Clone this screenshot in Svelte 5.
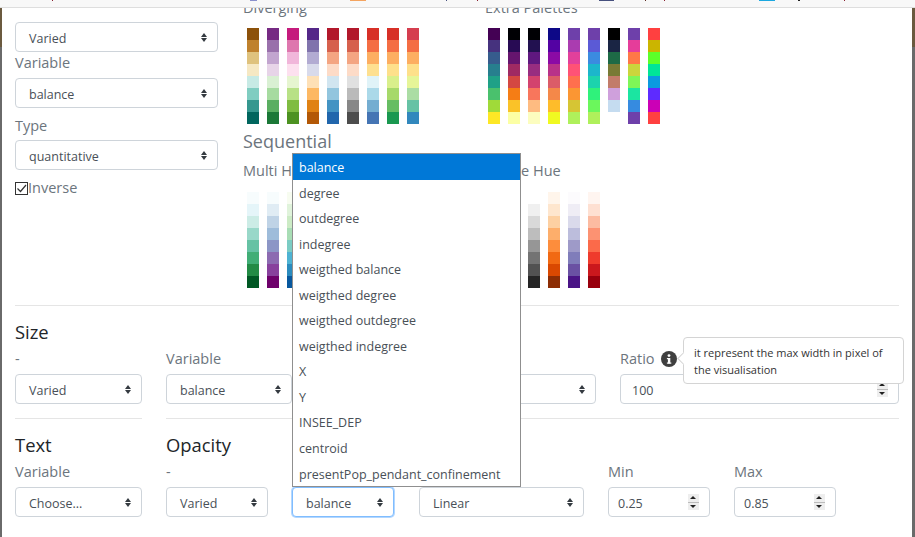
<script lang="ts">
	const diverging = [
		['#8c510a', '#bf812d', '#dfc27d', '#f6e8c3', '#c7eae5', '#80cdc1', '#35978f', '#01665e'],
		['#762a83', '#9970ab', '#c2a5cf', '#e7d4e8', '#d9f0d3', '#a6dba0', '#5aae61', '#1b7837'],
		['#c51b7d', '#de77ae', '#f1b6da', '#fde0ef', '#e6f5d0', '#b8e186', '#7fbc41', '#4d9221'],
		['#542788', '#8073ac', '#b2abd2', '#d8daeb', '#fee0b6', '#fdb863', '#e08214', '#b35806'],
		['#b2182b', '#d6604d', '#f4a582', '#fddbc7', '#d1e5f0', '#92c5de', '#4393c3', '#2166ac'],
		['#b2182b', '#d6604d', '#f4a582', '#fddbc7', '#e0e0e0', '#bababa', '#878787', '#4d4d4d'],
		['#d73027', '#f46d43', '#fdae61', '#fee090', '#e0f3f8', '#abd9e9', '#74add1', '#4575b4'],
		['#d73027', '#f46d43', '#fdae61', '#fee08b', '#d9ef8b', '#a6d96a', '#66bd63', '#1a9850'],
		['#d53e4f', '#f46d43', '#fdae61', '#fee08b', '#e6f598', '#abdda4', '#66c2a5', '#3288bd']
	];
	const extra = [
		['#440154', '#46327e', '#365c8d', '#277f8e', '#1fa187', '#4ac16d', '#a0da39', '#fde725'],
		['#000004', '#280b54', '#65156e', '#9f2a63', '#d44842', '#f57d15', '#fac228', '#fcffa4'],
		['#000004', '#221150', '#5f187f', '#982d80', '#d3436e', '#f8765c', '#febb81', '#fcfdbf'],
		['#0d0887', '#5302a3', '#8b0aa5', '#b83289', '#db5c68', '#f48849', '#febc2a', '#f0f921'],
		['#6e40aa', '#aa3cb0', '#e2409b', '#ff5276', '#ff6f4e', '#fb9633', '#d6c534', '#aff05b'],
		['#6e40aa', '#5b5ad6', '#3b8be0', '#1cb6cb', '#1cd3ad', '#2ff27b', '#6bf75c', '#aff05b'],
		['#000000', '#1a2544', '#1d6a46', '#787a35', '#c27c6a', '#cfa0dc', '#c5dcf0', '#ffffff'],
		['#6e40aa', '#e53d9a', '#ff7847', '#cbd53c', '#7ef658', '#1be5a1', '#368be0', '#6e40aa'],
		['#ff4040', '#cbb500', '#5cff29', '#00e598', '#0b9ae0', '#5e2bff', '#cb00b6', '#ff4040']
	];
	const multiHue = [
		['#f7fcfd', '#e5f5f9', '#ccece6', '#99d8c9', '#66c2a4', '#41ae76', '#238b45', '#005824'],
		['#f7fcfd', '#e0ecf4', '#bfd3e6', '#9ebcda', '#8c96c6', '#8c6bb1', '#88419d', '#6e016b'],
		['#f7fcf0', '#e0f3db', '#ccebc5', '#a8ddb5', '#7bccc4', '#4eb3d3', '#2b8cbe', '#08589e']
	];
	const singleHue = [
		['#f7fbff', '#deebf7', '#c6dbef', '#9ecae1', '#6baed6', '#4292c6', '#2171b5', '#084594'],
		['#f7fcf5', '#e5f5e0', '#c7e9c0', '#a1d99b', '#74c476', '#41ab5d', '#238b45', '#005a32'],
		['#ffffff', '#f0f0f0', '#d9d9d9', '#bdbdbd', '#969696', '#737373', '#525252', '#252525'],
		['#fff5eb', '#fee6ce', '#fdd0a2', '#fdae6b', '#fd8d3c', '#f16913', '#d94801', '#8c2d04'],
		['#fcfbfd', '#efedf5', '#dadaeb', '#bcbddc', '#9e9ac8', '#807dba', '#6a51a3', '#4a1486'],
		['#fff5f0', '#fee0d2', '#fcbba1', '#fc9272', '#fb6a4a', '#ef3b2c', '#cb181d', '#99000d']
	];
	const options = [
		'balance', 'degree', 'outdegree', 'indegree', 'weigthed balance', 'weigthed degree',
		'weigthed outdegree', 'weigthed indegree', 'X', 'Y', 'INSEE_DEP', 'centroid',
		'presentPop_pendant_confinement'
	];
	// slivers of the page behind the modal, peeking out at the very top
	const slivers = [
		[52, 1, '#8a2030'], [250, 7, '#8a90cc'], [350, 16, '#f4a460'], [446, 1, '#46507e'],
		[477, 1, '#8a2030'], [599, 15, '#46507e'], [645, 1, '#5a2a20'], [664, 1, '#8a2030'],
		[759, 16, '#1ca8e0'], [798, 2, '#222222'], [844, 1, '#8a2030']
	];
</script>

{#snippet palettes(list)}
	<div class="palettes">
		{#each list as palette}
			<div class="palette">
				{#each palette as color}
					<span style="background: {color}"></span>
				{/each}
			</div>
		{/each}
	</div>
{/snippet}

{#snippet field(value, cls = '')}
	<div class="select {cls}"><span>{value}</span><i></i></div>
{/snippet}

{#snippet number(value, cls = '')}
	<div class="number {cls}">
		<span>{value}</span>
		<b class="spin"><em class="up"></em><em class="down"></em></b>
	</div>
{/snippet}

<div class="page">
	<div class="topbar">
		{#each slivers as [x, w, color]}
			<span style="left: {x}px; width: {w}px; background: {color}"></span>
		{/each}
	</div>
	<div class="modal">
		<div class="color-row">
			<div class="left">
				{@render field('Varied')}
				<label class="var-label">Variable</label>
				{@render field('balance')}
				<label class="type-label">Type</label>
				{@render field('quantitative')}
				<div class="inverse">
					<span class="check">
						<svg viewBox="0 0 13 13" width="13" height="13"><path d="M2.5 6.5l3 3 5.5-6.5" fill="none" stroke="#333" stroke-width="1.2" /></svg>
					</span>
					<span>Inverse</span>
				</div>
			</div>
			<div class="right">
				<div class="pal-grid top">
					<div>
						<h6>Diverging</h6>
						{@render palettes(diverging)}
					</div>
					<div class="second">
						<h6>Extra Palettes</h6>
						{@render palettes(extra)}
					</div>
				</div>
				<h5>Sequential</h5>
				<div class="pal-grid seq">
					<div>
						<h6>Multi Hue</h6>
						{@render palettes(multiHue)}
					</div>
					<div class="second">
						<h6 class="single">Single Hue</h6>
						{@render palettes(singleHue)}
					</div>
				</div>
			</div>
		</div>

		<hr class="rule-one" />

		<h4 class="size-title">Size</h4>
		<div class="size-row">
			<div class="c1"><label>-</label>{@render field('Varied')}</div>
			<div class="c2"><label>Variable</label>{@render field('balance')}</div>
			<div class="c3"><label>&nbsp;</label>{@render field('Linear')}</div>
			<div class="c4">
				<label class="ratio">Ratio <svg class="info" viewBox="0 0 16 16" width="16" height="16"><circle cx="8" cy="8" r="8" fill="#3f3f3f" /><rect x="6.9" y="7" width="2.4" height="5.5" fill="#fff" /><rect x="5.9" y="7" width="3" height="1.2" fill="#fff" /><rect x="5.9" y="11.5" width="4.4" height="1.2" fill="#fff" /><circle cx="8" cy="4.6" r="1.4" fill="#fff" /></svg></label>
				{@render number('100', 'ratio-input')}
			</div>
		</div>

		<div class="rules">
			<hr class="short" />
			<hr class="long" />
		</div>

		<div class="bottom-row">
			<div class="c1">
				<h4>Text</h4>
				<label>Variable</label>
				{@render field('Choose...')}
			</div>
			<div class="opacity">
				<h4>Opacity</h4>
				<div class="opacity-fields">
					<div class="o1"><label>-</label>{@render field('Varied')}</div>
					<div class="o2"><label>&nbsp;</label>{@render field('balance', 'focus')}</div>
					<div class="o3"><label>&nbsp;</label>{@render field('Linear')}</div>
					<div class="o4"><label>Min</label>{@render number('0.25')}</div>
					<div class="o4"><label>Max</label>{@render number('0.85')}</div>
				</div>
			</div>
		</div>

		<ul class="dropdown">
			{#each options as option, i}
				<li class:active={i === 0}>{option}</li>
			{/each}
		</ul>

		<div class="tooltip">it represent the max width in pixel of the visualisation</div>
	</div>
</div>

<style>
	:global(body) {
		margin: 0;
		background: #fff;
	}
	.page {
		width: 915px;
		height: 537px;
		overflow: hidden;
		display: flex;
		flex-direction: column;
		font-family: 'Open Sans', 'Noto Sans', sans-serif;
		color: #495057;
		background: linear-gradient(#6b5a3f 47px, #6a6a6a 47px);
	}
	.topbar {
		height: 7px;
		flex: none;
		background: #f8f8f8;
		border-bottom: 1px solid #dedede;
		position: relative;
		z-index: 2;
	}
	.topbar span {
		position: absolute;
		top: 0;
		height: 1px;
	}
	.modal {
		position: relative;
		flex: 1;
		margin: 0 3px 0 2px;
		padding: 0 13px;
		background: #fff;
		min-height: 0;
	}
	h4,
	h5,
	h6,
	label {
		margin: 0;
		font-weight: 400;
		display: block;
	}
	h4 {
		font-size: 18.4px;
		line-height: 24px;
		color: #212529;
	}
	h5 {
		font-size: 18px;
		line-height: 24px;
		color: #6c757d;
		margin-top: 5px;
	}
	h6 {
		font-size: 14.5px;
		line-height: 20px;
		color: #6c757d;
	}
	h6.single {
		padding-left: 4px;
	}
	label {
		font-size: 14.5px;
		line-height: 20px;
		color: #6c757d;
	}
	.color-row {
		display: flex;
		height: 297px;
	}
	.left {
		width: 203px;
		flex: none;
		padding-top: 14px;
	}
	.var-label {
		height: 26px;
		line-height: 21px;
	}
	.type-label {
		margin-top: 8px;
		height: 24px;
	}
	.right {
		margin-left: 25px;
		margin-top: -10px;
		flex: 1;
	}
	.pal-grid {
		display: flex;
	}
	.pal-grid > div {
		width: 242px;
	}
	.pal-grid.seq {
		margin-top: 8px;
	}
	.pal-grid.seq .palettes {
		padding-top: 11px;
	}
	.palettes {
		display: flex;
		gap: 8px;
		padding: 10px 4px 0;
	}
	.second .palettes {
		padding-left: 3px;
	}
	.palette {
		width: 12px;
		display: flex;
		flex-direction: column;
	}
	.palette span {
		height: 12px;
	}
	.select {
		height: 30px;
		box-sizing: border-box;
		border: 1px solid #ced4da;
		border-radius: 4px;
		padding: 2px 10px 0 13px;
		display: flex;
		align-items: center;
		justify-content: space-between;
		font-size: 12.5px;
		color: #495057;
		background: #fff;
		position: relative;
	}
	.select i {
		width: 6px;
		height: 9px;
		position: relative;
		display: block;
		margin-top: -2px;
	}
	.select i::before,
	.select i::after {
		content: '';
		position: absolute;
		left: 0;
		border-left: 3px solid transparent;
		border-right: 3px solid transparent;
	}
	.select i::before {
		top: 0;
		border-bottom: 4px solid #343a40;
	}
	.select i::after {
		bottom: 0;
		border-top: 4px solid #343a40;
	}
	.select.focus {
		border-color: #80bdff;
		box-shadow: 0 0 0 1px rgba(128, 189, 255, 0.6);
	}
	.number {
		height: 30px;
		box-sizing: border-box;
		border: 1px solid #ced4da;
		border-radius: 4px;
		padding: 0 10px 0 9px;
		display: flex;
		align-items: center;
		justify-content: space-between;
		font-size: 12.5px;
		color: #495057;
		background: #fff;
	}
	.number > span {
		padding-top: 2px;
	}
	.number.ratio-input {
		padding-left: 11px;
	}
	.spin {
		width: 11px;
		height: 16px;
		display: flex;
		flex-direction: column;
		gap: 1px;
		background: #bbb;
	}
	.spin em {
		flex: 1;
		background: #eee;
		position: relative;
	}
	.spin em::after {
		content: '';
		position: absolute;
		left: 2px;
		border-left: 3px solid transparent;
		border-right: 3px solid transparent;
	}
	.spin .up::after {
		top: 2px;
		border-bottom: 3px solid #222;
	}
	.spin .down::after {
		top: 2px;
		border-top: 3px solid #222;
	}
	.inverse {
		display: flex;
		align-items: center;
		font-size: 14.5px;
		line-height: 20px;
		color: #6c757d;
		margin-top: 8px;
	}
	.check {
		width: 13px;
		height: 13px;
		border: 1px solid #333;
		box-sizing: border-box;
		display: flex;
		align-items: center;
		justify-content: center;
	}
	.check svg {
		flex: none;
	}
	hr {
		border: 0;
		border-top: 1px solid #e5e5e5;
		margin: 0;
	}
	.size-title {
		margin-top: 14px;
	}
	.size-row {
		display: flex;
		margin-top: 5px;
	}
	.size-row label,
	.bottom-row label {
		margin-bottom: 5px;
	}
	.bottom-row h4 {
		margin-bottom: 5px;
	}
	.c1 {
		width: 127px;
		flex: none;
	}
	.c2 {
		width: 126px;
		margin-left: 24px;
		flex: none;
	}
	.c3 {
		width: 178px;
		margin-left: 126px;
		flex: none;
	}
	.c4 {
		flex: 1;
		margin-left: 24px;
	}
	.ratio {
		display: flex;
		align-items: center;
		gap: 6px;
	}
	.rules {
		display: flex;
		margin-top: 14px;
	}
	.short {
		width: 127px;
		flex: none;
	}
	.long {
		flex: 1;
		margin-left: 24px;
	}
	.bottom-row {
		display: flex;
		margin-top: 14px;
	}
	.opacity {
		margin-left: 24px;
		flex: 1;
	}
	.opacity-fields {
		display: flex;
	}
	.o1 {
		width: 102px;
		flex: none;
	}
	.o2 {
		width: 102px;
		flex: none;
		margin-left: 24px;
	}
	.o3 {
		width: 165px;
		flex: none;
		margin-left: 25px;
	}
	.o4 {
		width: 102px;
		flex: none;
		margin-left: 24px;
	}
	.dropdown {
		position: absolute;
		left: 290px;
		top: 145px;
		width: 229px;
		box-sizing: border-box;
		margin: 0;
		padding: 0;
		list-style: none;
		background: #fff;
		border: 1px solid #8f8f8f;
		font-size: 12.5px;
		color: #495057;
		z-index: 3;
	}
	.dropdown li {
		height: 25.55px;
		line-height: 27.5px;
		padding: 0 6px;
		white-space: nowrap;
	}
	.dropdown li.active {
		background: #0078d7;
		color: #fff;
	}
	.tooltip {
		position: absolute;
		left: 681px;
		top: 329px;
		width: 221px;
		height: 47px;
		box-sizing: border-box;
		padding: 6px 10px;
		background: #fff;
		border: 1px solid #d4d4d4;
		border-radius: 4px;
		font-size: 11px;
		line-height: 17px;
		color: #333;
		z-index: 4;
	}
	.tooltip::before {
		content: '';
		position: absolute;
		left: -5px;
		top: 16px;
		width: 8px;
		height: 8px;
		background: #fff;
		border-left: 1px solid #d4d4d4;
		border-bottom: 1px solid #d4d4d4;
		transform: rotate(45deg);
	}
</style>
